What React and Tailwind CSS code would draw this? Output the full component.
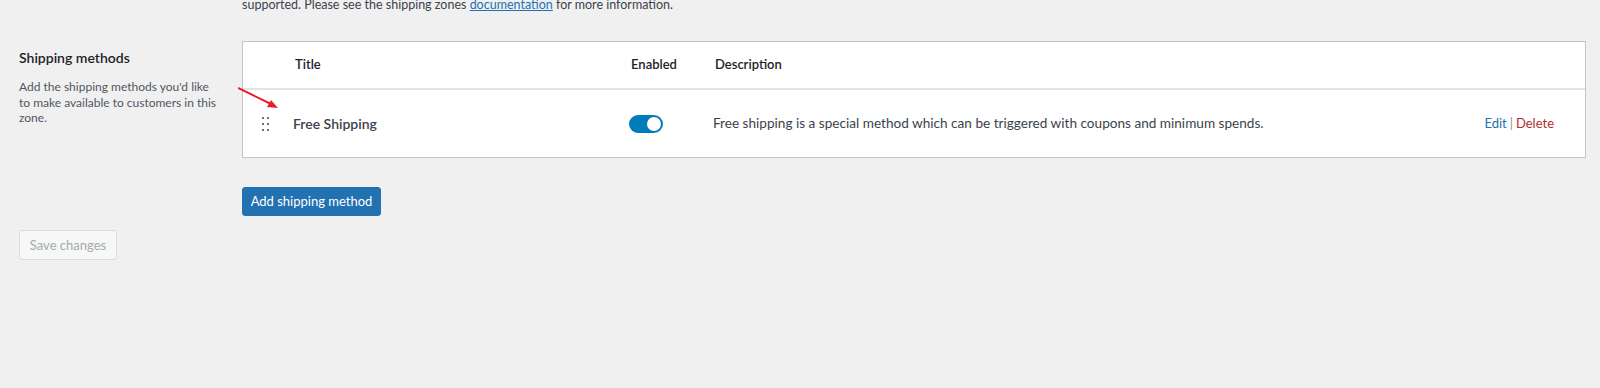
import React from 'react';

const font = { fontFamily: 'Lato, "Open Sans", sans-serif' };

function DragHandle() {
  return (
    <svg width="8" height="14" viewBox="0 0 8 14" className="text-[#1d2327]">
      {[1, 7, 13].map((y) =>
        [1, 6].map((x) => <rect key={`${x}-${y}`} x={x - 0.75} y={y - 0.75} width="1.6" height="1.6" fill="currentColor" />)
      )}
    </svg>
  );
}

function Toggle() {
  return (
    <span className="flex items-center w-[34px] h-[18px] rounded-full bg-[#007cba] justify-end pr-[2px]">
      <span className="w-[14px] h-[14px] rounded-full bg-white" />
    </span>
  );
}

export default function App() {
  return (
    <div className="relative min-h-[388px] bg-[#f0f0f1] pl-[19px] pr-[14px] overflow-hidden" style={font}>
      {/* bas du paragraphe précédent */}
      <p className="ml-[223px] -mt-[5px] h-[20px] leading-[20px] text-[12.5px] text-[#3c434a]">
        supported. Please see the shipping zones{' '}
        <a href="#" className="text-[#2271b1] underline">documentation</a> for more information.
      </p>

      <div className="flex mt-[26px]">
        {/* colonne de gauche */}
        <div className="w-[223px] shrink-0 pt-[7px] pr-[4px]">
          <h2 className="text-[14px] leading-[20px] font-semibold text-[#1d2327]">Shipping methods</h2>
          <p className="mt-[11px] text-[12px] leading-[15.5px] text-[#50575e] whitespace-nowrap">
            Add the shipping methods you'd like
            <br />
            to make available to customers in this
            <br />
            zone.
          </p>
        </div>

        {/* tableau */}
        <div className="flex-1">
          <div className="bg-white border border-[#c3c4c7]">
            <div className="flex items-center h-[48px] border-b-2 border-[#e4e4e4] text-[13px] font-semibold text-[#1d2327]">
              <div className="w-[44px] shrink-0" />
              <div className="w-[338px] shrink-0 pl-[8px]">Title</div>
              <div className="w-[80px] shrink-0 pl-[6px]">Enabled</div>
              <div className="flex-1 pl-[10px]">Description</div>
            </div>
            <div className="flex items-center h-[67px] text-[13px]">
              <div className="w-[44px] shrink-0 pl-[19px] flex items-center">
                <DragHandle />
              </div>
              <div className="w-[338px] shrink-0 pl-[6px] text-[14px] font-semibold text-[#3c434a]">Free Shipping</div>
              <div className="w-[80px] shrink-0 pl-[4px]">
                <Toggle />
              </div>
              <div className="flex-1 pl-[8px] text-[13.6px] text-[#3c434a]">
                Free shipping is a special method which can be triggered with coupons and minimum spends.
              </div>
              <div className="pr-[31px] whitespace-nowrap">
                <a href="#" className="text-[#2271b1]">Edit</a>
                <span className="text-[#8c8f94] mx-[3px]">|</span>
                <a href="#" className="text-[#b32d2e]">Delete</a>
              </div>
            </div>
          </div>

          <button className="mt-[29px] h-[29px] w-[139px] rounded-[3px] bg-[#2271b1] border border-[#2271b1] text-white text-[13px] leading-none">
            Add shipping method
          </button>
        </div>
      </div>

      <button className="mt-[14px] h-[30px] w-[98px] rounded-[3px] bg-[#f6f7f7] border border-[#dcdcde] text-[#a7aaad] text-[13px] leading-none">
        Save changes
      </button>

      {/* flèche d'annotation */}
      <svg className="absolute left-[238px] top-[87px]" width="44" height="24" viewBox="0 0 44 24">
        <line x1="0" y1="1" x2="33" y2="17" stroke="#ea1c24" strokeWidth="2" />
        <polygon points="40,21 29,20 33,13" fill="#ea1c24" />
      </svg>
    </div>
  );
}
